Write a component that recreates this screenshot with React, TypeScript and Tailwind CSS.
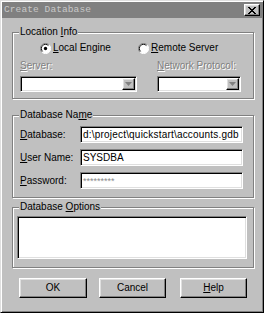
import type { ReactNode } from "react";

const raised =
  "border border-t-white border-l-white border-r-black border-b-black shadow-[inset_-1px_-1px_0_#808080,inset_1px_1px_0_#dfdfdf]";
const sunken =
  "border border-t-[#808080] border-l-[#808080] border-r-white border-b-white shadow-[inset_1px_1px_0_#000,inset_-1px_-1px_0_#dfdfdf]";
const etched = "border border-[#808080] shadow-[inset_1px_1px_0_#fff,1px_1px_0_#fff]";
const disabled = "text-[#808080] [text-shadow:1px_1px_0_#fff]";

function Key({ children }: { children: ReactNode }) {
  return <span className="underline decoration-1 underline-offset-[1px]">{children}</span>;
}

function Group({ label, className, children }: { label: ReactNode; className: string; children: ReactNode }) {
  return (
    <div className={`${etched} ml-[10px] w-[242px] ${className}`}>
      <div className="-mt-[7px] ml-[6px] w-fit bg-[#c0c0c0] px-[1px] leading-[12px]">{label}</div>
      {children}
    </div>
  );
}

function Radio({ checked }: { checked?: boolean }) {
  return (
    <svg width="11" height="11" viewBox="0 0 12 12" className="shrink-0">
      <circle cx="6" cy="6" r="5.5" fill="#fff" />
      <path d="M10 2A5.5 5.5 0 0 0 2 10" stroke="#808080" strokeWidth="1" fill="none" />
      <path d="M9.2 2.8A4.5 4.5 0 0 0 2.8 9.2" stroke="#000" strokeWidth="1" fill="none" />
      <path d="M2 10A5.5 5.5 0 0 0 10 2" stroke="#fff" strokeWidth="1" fill="none" />
      {checked && <circle cx="6" cy="6" r="1.8" fill="#000" />}
    </svg>
  );
}

function Combo() {
  return (
    <div className={`${sunken} flex h-[16px] justify-end bg-white p-[1px]`}>
      <div className={`${raised} flex w-[13px] items-center justify-center bg-[#c0c0c0]`}>
        <svg width="7" height="4" viewBox="0 0 7 4">
          <path d="M0 0h7L3.5 4z" fill="#808080" />
        </svg>
      </div>
    </div>
  );
}

function Field({ label, children }: { label: ReactNode; children?: ReactNode }) {
  return (
    <div className="flex items-center">
      <span className="w-[60px]">{label}</span>
      <div className={`${sunken} flex h-[17px] flex-1 items-center overflow-hidden whitespace-nowrap bg-white pl-[2px]`}>
        {children}
      </div>
    </div>
  );
}

function Button({ children, w }: { children: ReactNode; w: string }) {
  return (
    <button type="button" className={`${raised} ${w} flex h-[20px] items-center justify-center bg-[#c0c0c0] text-black`}>
      {children}
    </button>
  );
}

export default function App() {
  return (
    <div className="h-[313px] w-[264px] border border-t-[#dfdfdf] border-l-[#dfdfdf] border-r-black border-b-black bg-[#c0c0c0] p-[1px] font-['Liberation_Sans',Arial,sans-serif] text-[10px] leading-[12px] text-black shadow-[inset_1px_1px_0_#fff,inset_-1px_-1px_0_#808080]">
      <div className="flex h-[16px] items-center justify-between bg-[#808080] pl-[2px]">
        <span className="font-['Liberation_Mono',monospace] text-[9.5px] tracking-[0.1px] text-[#c8c8c8]">
          Create Database
        </span>
        <button type="button" className={`${raised} mr-[2px] flex h-[12px] w-[16px] items-center justify-center bg-[#c0c0c0]`}>
          <svg width="8" height="7" viewBox="0 0 8 7">
            <path
              d="M0 0h2v1H0zM6 0h2v1H6zM1 1h2v1H1zM5 1h2v1H5zM2 2h4v1H2zM3 3h2v1H3zM2 4h4v1H2zM1 5h2v1H1zM5 5h2v1H5zM0 6h2v1H0zM6 6h2v1H6z"
              fill="#000"
            />
          </svg>
        </button>
      </div>

      <Group
        className="mt-[14px] pb-[6px]"
        label={
          <>
            Location <Key>I</Key>nfo
          </>
        }
      >
        <div className="mt-[4px] flex h-[12px] items-center pl-[27px]">
          <label className="flex w-[98px] items-center gap-[2px]">
            <Radio checked />
            <span>
              <Key>L</Key>ocal Engine
            </span>
          </label>
          <label className="flex items-center gap-[2px]">
            <Radio />
            <span>
              <Key>R</Key>emote Server
            </span>
          </label>
        </div>
        <div className="mt-[6px] grid grid-cols-[117px_84px] gap-x-[20px] gap-y-[4px] pl-[7px]">
          <span className={disabled}>
            <Key>S</Key>erver:
          </span>
          <span className={disabled}>
            <Key>N</Key>etwork Protocol:
          </span>
          <Combo />
          <Combo />
        </div>
      </Group>

      <Group
        className="mt-[16px] pb-[8px]"
        label={
          <>
            Database Na<Key>m</Key>e
          </>
        }
      >
        <div className="mt-[5px] flex flex-col gap-[6px] pl-[7px] pr-[10px]">
          <Field
            label={
              <>
                <Key>D</Key>atabase:
              </>
            }
          >
            <span className="tracking-[0.2px]">d:\project\quickstart\accounts.gdb</span>
          </Field>
          <Field
            label={
              <>
                <Key>U</Key>ser Name:
              </>
            }
          >
            SYSDBA
          </Field>
          <Field
            label={
              <>
                <Key>P</Key>assword:
              </>
            }
          >
            <span className="text-[9px] text-[#8a8a8a]">*********</span>
          </Field>
        </div>
      </Group>

      <Group
        className="mt-[9px] pb-[8px]"
        label={
          <>
            Database <Key>O</Key>ptions
          </>
        }
      >
        <div className={`${sunken} ml-[4px] mt-[3px] h-[43px] w-[230px] bg-white`} />
      </Group>

      <div className="ml-[17px] mt-[10px] flex">
        <Button w="w-[68px]">OK</Button>
        <div className="w-[12px]" />
        <Button w="w-[67px]">Cancel</Button>
        <div className="w-[14px]" />
        <Button w="w-[67px]">
          <Key>H</Key>elp
        </Button>
      </div>
    </div>
  );
}
